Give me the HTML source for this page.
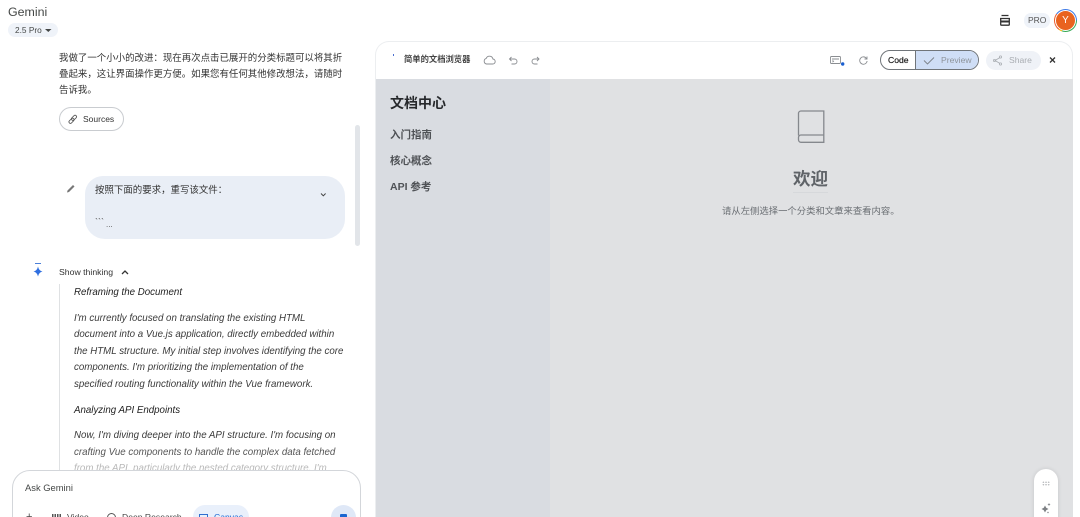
<!DOCTYPE html>
<html><head><meta charset="utf-8">
<style>
*{box-sizing:border-box;margin:0;padding:0}
html,body{width:1080px;height:517px;overflow:hidden;background:#fff}
#r{position:relative;width:1080px;height:517px;overflow:hidden;background:#fff;font-family:"Liberation Sans","Noto Sans CJK SC",sans-serif;color:#1f1f1f;filter:blur(.3px)}
.a{position:absolute;white-space:nowrap}
.l{position:absolute;white-space:nowrap;left:74px;font-size:9.72px;font-style:italic;color:#3a3a3a;line-height:17px}
.z{position:absolute;white-space:nowrap;left:59px;font-size:9.45px;color:#333;line-height:16px}
svg{position:absolute;overflow:visible;left:0;top:0}
</style></head><body><div id="r">
<div class="a" style="left:8px;top:4px;font-size:12.4px;line-height:16px;color:#444746">Gemini</div>
<div class="a" style="left:8px;top:23px;width:50px;height:14px;border-radius:7px;background:#eff3f9"></div>
<div class="a" style="left:15px;top:24px;font-size:8.3px;line-height:12px;color:#444746">2.5 Pro</div>
<svg width="1" height="1"><path d="M45 29h6.5l-3.2 3z" fill="#444746"/></svg>

<div class="z" style="top:51px">我做了一个小小的改进：现在再次点击已展开的分类标题可以将其折</div>
<div class="z" style="top:67px">叠起来，这让界面操作更方便。如果您有任何其他修改想法，请随时</div>
<div class="z" style="top:83px">告诉我。</div>

<div class="a" style="left:59px;top:107px;width:65px;height:24px;border:1px solid #c9ccd0;border-radius:12px"></div>
<svg width="1" height="1"><g fill="none" stroke="#555" stroke-width=".8"><rect x="68.500" y="119.300" width="6" height="3" rx="1.500" transform="rotate(-45 71.500 120.800)"/><rect x="71" y="116.300" width="6" height="3" rx="1.500" transform="rotate(-45 74 117.800)"/></g></svg>
<div class="a" style="left:83px;top:113px;font-size:8.5px;line-height:12px;color:#333">Sources</div>

<div class="a" style="left:355px;top:125px;width:5px;height:121px;background:#e2e5e9;border-radius:3px"></div>

<svg width="1" height="1"><path d="M67.500 190.500l5.500-5.500 1.500 1.500-5.500 5.500-2 .5z" fill="#777"/></svg>
<div class="a" style="left:85px;top:176px;width:260px;height:63px;background:#e9eef6;border-radius:18px 20px 20px 20px"></div>
<div class="a" style="left:95px;top:183px;font-size:9.45px;line-height:16px;color:#333">按照下面的要求，重写该文件：</div>
<svg width="1" height="1"><path d="M321 193.500l2.300 2.300 2.300-2.300" fill="none" stroke="#444" stroke-width="1"/></svg>
<div class="a" style="left:95px;top:216px;font-size:9px;line-height:12px;color:#555">&#96;&#96;&#96;</div>
<div class="a" style="left:106px;top:219px;font-size:8px;line-height:12px;color:#555">...</div>

<svg width="1" height="1"><path d="M35 263.500h6" fill="none" stroke="#4b7fd8" stroke-width="1"/><path d="M38 266.500q.8 4.200 4.500 5-3.700.8-4.500 5-.8-4.200-4.500-5 3.700-.8 4.500-5z" fill="#2f6fe0"/></svg>
<div class="a" style="left:59px;top:266px;font-size:8.7px;line-height:12px;color:#333">Show thinking</div>
<svg width="1" height="1"><path d="M122 274l3-3 3 3" fill="none" stroke="#333" stroke-width="1.300"/></svg>
<div class="a" style="left:59px;top:284px;width:1px;height:190px;background:#dfe1e3"></div>

<div class="l" style="top:284px;color:#222">Reframing the Document</div>
<div class="l" style="top:310px">I'm currently focused on translating the existing HTML</div>
<div class="l" style="top:326px">document into a Vue.js application, directly embedded within</div>
<div class="l" style="top:343px">the HTML structure. My initial step involves identifying the core</div>
<div class="l" style="top:359px">components. I'm prioritizing the implementation of the</div>
<div class="l" style="top:376px">specified routing functionality within the Vue framework.</div>
<div class="l" style="top:402px;color:#222">Analyzing API Endpoints</div>
<div class="l" style="top:427px">Now, I'm diving deeper into the API structure. I'm focusing on</div>
<div class="l" style="top:444px;color:#555">crafting Vue components to handle the complex data fetched</div>
<div class="l" style="top:460px;color:#b8b8b8">from the API, particularly the nested category structure. I'm</div>

<div class="a" style="left:12px;top:470px;width:349px;height:70px;background:#fff;border:1px solid #d3d6da;border-radius:18px"></div>
<div class="a" style="left:25px;top:482px;font-size:9.4px;line-height:12px;color:#444746">Ask Gemini</div>
<div class="a" style="left:26px;top:511px;font-size:11px;line-height:12px;color:#444">+</div>
<div class="a" style="left:52px;top:514px;width:9px;height:5px;background:repeating-linear-gradient(90deg,#555 0 1.5px,#fff 1.5px 2.5px)"></div>
<div class="a" style="left:67px;top:511px;font-size:8.6px;line-height:12px;color:#444">Video</div>
<div class="a" style="left:107px;top:513px;width:9px;height:9px;border-radius:50%;border:1.5px solid #555"></div>
<div class="a" style="left:122px;top:511px;font-size:8.6px;line-height:12px;color:#444">Deep Research</div>
<div class="a" style="left:193px;top:505px;width:56px;height:24px;background:#e9f0fb;border-radius:12px"></div>
<div class="a" style="left:199px;top:514px;width:9px;height:6px;border:1px solid #2f6fd0"></div>
<div class="a" style="left:214px;top:511px;font-size:8.6px;line-height:12px;color:#1a66d0">Canvas</div>
<div class="a" style="left:262px;top:515px;font-size:8px;line-height:8px;color:#777;letter-spacing:.5px">···</div>
<div class="a" style="left:331px;top:505px;width:25px;height:25px;background:#dfe8f7;border-radius:50%"></div>
<div class="a" style="left:340px;top:514px;width:7px;height:7px;background:#1a66d0;border-radius:1px"></div>

<div class="a" style="left:375px;top:41px;width:698px;height:490px;background:#fff;border:1px solid #eceef0;border-bottom:0;border-radius:14px 14px 0 0"></div>
<div class="a" style="left:376px;top:79px;width:174px;height:438px;background:#d9dce1"></div>
<div class="a" style="left:550px;top:79px;width:523px;height:438px;background:#e0e1e3"></div>

<div class="a" style="left:393px;top:54px;width:1px;height:2px;background:#4a6fd0"></div>
<div class="a" style="left:404px;top:53px;font-size:8.3px;font-weight:700;line-height:13px;color:#444">简单的文档浏览器</div>
<svg width="1" height="1"><g fill="none" stroke="#8a8d91" stroke-width=".9"><path d="M486.500 64h6a2.500 2.500 0 0 0 .4-5 3.500 3.500 0 0 0-6.700-.6 2.900 2.900 0 0 0 .3 5.600z"/><path d="M509.500 59h5a2.500 2.500 0 0 1 0 5h-3M511.500 57l-2 2 2 2"/><path d="M539 59h-4.500a2.500 2.500 0 0 0 0 5h3M537 57l2 2-2 2"/></g></svg>

<svg width="1" height="1"><g fill="none" stroke="#8a8d91" stroke-width=".9"><rect x="830.500" y="56.500" width="10" height="7" rx="1"/><path d="M832 59h7M832.500 60.500l1 .8-1 .8"/><path d="M866.500 58.500a3.700 3.700 0 1 0 .6 2.500M867 56.500v2.500h-2.500"/></g><circle cx="842.700" cy="64" r="1.700" fill="#1a5fd0"/></svg>

<div class="a" style="left:880px;top:50px;width:99px;height:20px;border:1px solid #70757a;border-radius:10px;background:#fff;overflow:hidden">
<div class="a" style="left:34px;top:0;width:65px;height:18px;background:#cfdef6;border-left:1px solid #70757a"></div>
<div class="a" style="left:7px;top:3px;font-size:8.6px;line-height:12px;color:#222;-webkit-text-stroke:.2px #222">Code</div>
<div class="a" style="left:60px;top:3px;font-size:8.6px;line-height:12px;color:#8e949b">Preview</div>
<svg width="1" height="1"><path d="M43 9.500l3.500 3.500 6.500-6.500" fill="none" stroke="#7b8188" stroke-width=".9"/></svg>
</div>
<div class="a" style="left:986px;top:51px;width:55px;height:19px;border-radius:10px;background:#eff2f7"></div>
<svg width="1" height="1"><g fill="none" stroke="#a9adb2" stroke-width=".8"><path d="M1000 57.500l-5 3 5 3"/><circle cx="1000.500" cy="57" r="1.100"/><circle cx="994.500" cy="60.500" r="1.100"/><circle cx="1000.500" cy="64" r="1.100"/></g><path d="M1050 57.500l5 5M1055 57.500l-5 5" stroke="#333" stroke-width="1.300"/></svg>
<div class="a" style="left:1009px;top:54px;font-size:8.6px;line-height:12px;color:#a9adb2">Share</div>

<svg width="1" height="1"><g fill="none" stroke="#333" stroke-width="1.300"><path d="M1001.500 15.500h7M1000 18.500h10"/><path d="M1000.700 18.500v6a.7.7 0 0 0 .7.7h7.200a.7.7 0 0 0 .7-.7v-6"/></g><path d="M1001 20.500h8v2h-8z" fill="#333"/></svg>
<div class="a" style="left:1024px;top:13px;width:26px;height:15px;background:#eff3f9;border-radius:7px"></div>
<div class="a" style="left:1028px;top:15px;font-size:8.5px;line-height:11px;color:#555">PRO</div>
<div class="a" style="left:1054px;top:9px;width:23px;height:23px;border-radius:50%;background:conic-gradient(#3b78e7 0 25%,#34a853 25% 55%,#f5b400 55% 60%,#ea5a28 60% 85%,#3b78e7 85%)"></div>
<div class="a" style="left:1055px;top:10px;width:21px;height:21px;border-radius:50%;background:#e9631f;border:1px solid #fff"></div>
<div class="a" style="left:1055px;top:15px;width:21px;text-align:center;font-size:10px;line-height:11px;color:#fff">Y</div>

<div class="a" style="left:390px;top:94px;font-size:14px;font-weight:700;line-height:19px;color:#26282b">文档中心</div>
<div class="a" style="left:390px;top:128px;font-size:10.5px;font-weight:700;line-height:15px;color:#4f5256">入门指南</div>
<div class="a" style="left:390px;top:154px;font-size:10.5px;font-weight:700;line-height:15px;color:#4f5256">核心概念</div>
<div class="a" style="left:390px;top:180px;font-size:10.5px;font-weight:700;line-height:15px;color:#4f5256">API 参考</div>

<svg width="1" height="1"><g fill="none" stroke="#85888d" stroke-width="1.300"><path d="M798.500 135.500v-22a2.500 2.500 0 0 1 2.500-2.500h22.800v31.300h-22.800a2.500 2.500 0 0 1-2.500-2.500v-2a2.500 2.500 0 0 1 2.500-2.800h22.800"/></g></svg>
<div class="a" style="left:793px;top:168px;font-size:17.5px;font-weight:700;line-height:22px;color:#5f6368">欢迎</div>
<div class="a" style="left:793px;top:192px;width:35px;height:1px;background:#d6d8db"></div>
<div class="a" style="left:722px;top:204px;font-size:9.35px;line-height:15px;color:#6a6e73">请从左侧选择一个分类和文章来查看内容。</div>

<div class="a" style="left:1034px;top:469px;width:24px;height:70px;background:#fff;border-radius:12px;box-shadow:0 0 4px rgba(0,0,0,.12)"></div>
<div class="a" style="left:1042px;top:481px;width:8px;height:5px;background:radial-gradient(circle,#b5b7ba 0 .7px,transparent .8px) 0 0/2.7px 2.5px"></div>
<svg width="1" height="1"><g fill="#7d8084"><path d="M1045 505.500l1.200 2.300 2.300 1.200-2.300 1.200-1.200 2.300-1.200-2.300-2.300-1.200 2.300-1.200z"/><path d="M1049 503l.5 1 1 .5-1 .5-.5 1-.5-1-1-.5 1-.5z"/><circle cx="1048" cy="512.500" r=".7"/></g></svg>
</div></body></html>
